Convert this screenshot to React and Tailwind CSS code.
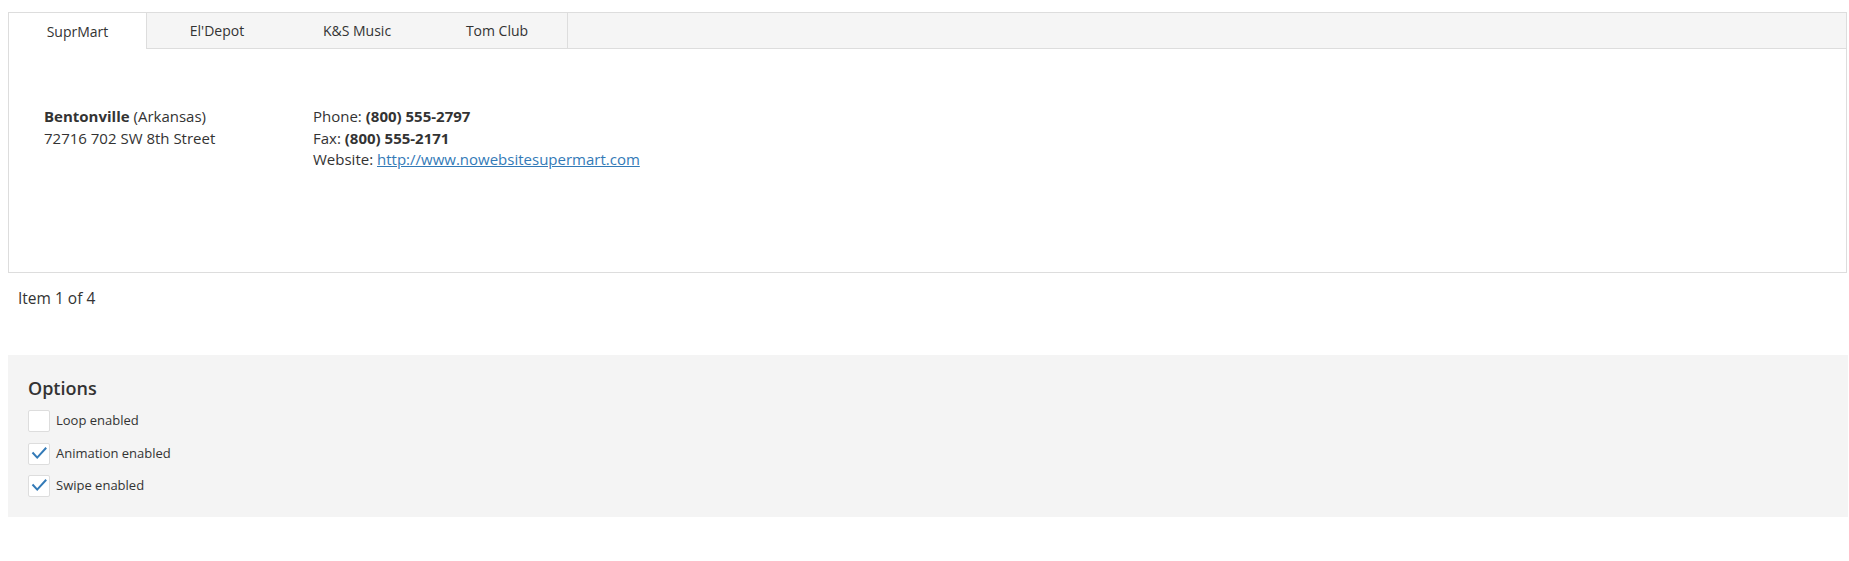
import React from "react";

function Check({ checked }) {
  return (
    <div className="w-[22px] h-[22px] bg-white border border-[#dddddd] rounded-[2px] flex items-center justify-center relative">
      {checked && (
        <svg width="22" height="22" viewBox="0 0 22 22" className="absolute -left-px -top-px">
          <path d="M4.5 9.5 L9.2 14.6 L18.2 4.8" fill="none" stroke="#337ab7" strokeWidth="2" />
        </svg>
      )}
    </div>
  );
}

export default function App() {
  const tabs = ["SuprMart", "El'Depot", "K&S Music", "Tom Club"];
  return (
    <div className="pt-[12px] px-[8px] pr-px font-['Open_Sans',sans-serif] text-[#333333]">
      <div className="border border-[#dddddd] mr-px">
        <div className="flex h-[36px] bg-[#f5f5f5]">
          <div className="w-[138px] border-r border-[#dddddd] bg-white flex items-center justify-center text-[14px]">
            SuprMart
          </div>
          <div className="w-[140px] border-b border-[#dddddd] flex items-center justify-center text-[14px]">
            {tabs[1]}
          </div>
          <div className="w-[140px] border-b border-[#dddddd] flex items-center justify-center text-[14px]">
            {tabs[2]}
          </div>
          <div className="w-[141px] border-b border-r border-[#dddddd] flex items-center justify-center text-[14px]">
            {tabs[3]}
          </div>
          <div className="flex-1 border-b border-[#dddddd]"></div>
        </div>
        <div className="h-[223px] pt-[57px] pl-[35px] flex text-[15px] leading-[21.5px]">
          <div className="w-[269px]">
            <div>
              <span className="font-bold">Bentonville</span> (Arkansas)
            </div>
            <div>72716 702 SW 8th Street</div>
          </div>
          <div>
            <div>
              Phone: <span className="font-bold">(800) 555-2797</span>
            </div>
            <div>
              Fax: <span className="font-bold">(800) 555-2171</span>
            </div>
            <div>
              Website:{" "}
              <a href="#" className="text-[#337ab7] underline">
                http://www.nowebsitesupermart.com
              </a>
            </div>
          </div>
        </div>
      </div>
      <div className="pl-[10px] pt-[15px] text-[15.5px] leading-[20px] h-[82px]">Item 1 of 4</div>
      <div className="bg-[#f4f4f4] pl-[20px] pt-[21px] pb-[20px]">
        <div className="text-[18px] leading-[24px] font-semibold mb-[10px]">Options</div>
        <div className="flex flex-col gap-[10.5px] text-[13px]">
          <label className="flex items-center gap-[6px]">
            <Check checked={false} />
            <span>Loop enabled</span>
          </label>
          <label className="flex items-center gap-[6px]">
            <Check checked={true} />
            <span>Animation enabled</span>
          </label>
          <label className="flex items-center gap-[6px]">
            <Check checked={true} />
            <span>Swipe enabled</span>
          </label>
        </div>
      </div>
    </div>
  );
}
